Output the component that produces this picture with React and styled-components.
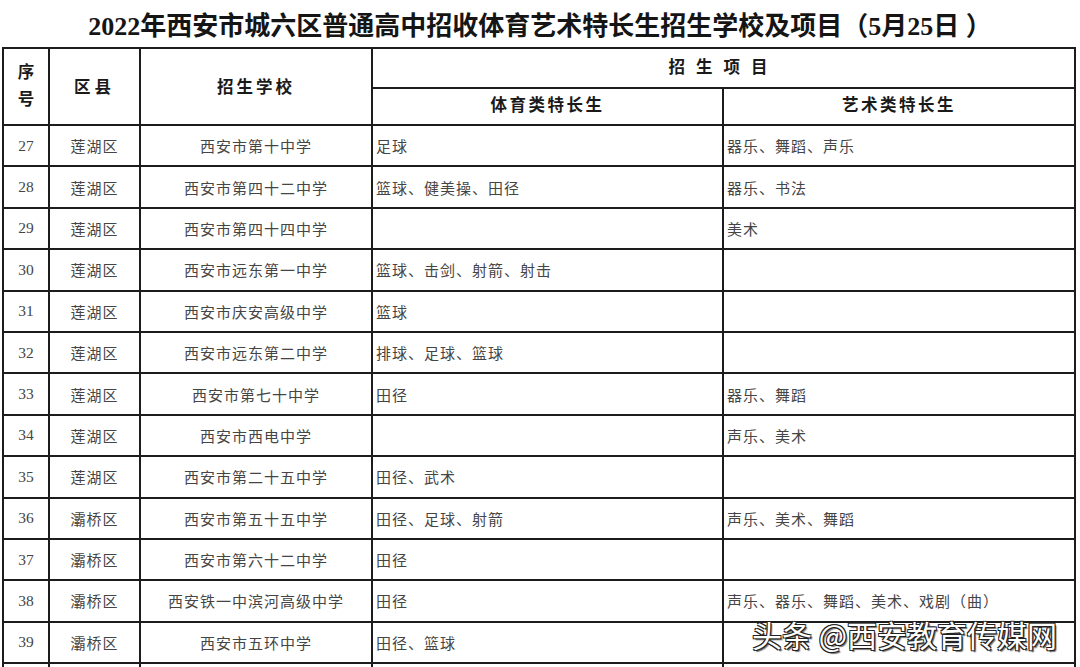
import React from "react";
import styled, { createGlobalStyle } from "styled-components";

const Global = createGlobalStyle`
  html, body { margin: 0; padding: 0; background: #fff; }
  body { width: 1080px; height: 667px; overflow: hidden; }
`;

const Page = styled.div`
  position: relative;
  width: 1080px;
  height: 667px;
  overflow: hidden;
  background: #fff;
  font-family: "Liberation Serif", "Noto Sans CJK SC", serif;
`;

const Title = styled.h1`
  margin: 0;
  height: 47px;
  display: flex;
  align-items: center;
  justify-content: center;
  padding-left: 0;
  font-size: 26px;
  font-weight: 700;
  color: #151515;
  letter-spacing: 0;
  white-space: pre;
`;

const Table = styled.table`
  margin-left: 2px;
  width: 1074px;
  border-collapse: collapse;
  table-layout: fixed;
`;

const Th = styled.th`
  border: 2px solid #1c1c1c;
  padding: ${(p) => (p.$pt ? p.$pt : "0")};
  font-size: 16.5px;
  font-weight: 700;
  color: #1a1a1a;
  letter-spacing: ${(p) => p.$spacing || "3px"};
  text-align: center;
  vertical-align: middle;
  line-height: 1.6;
`;

const Td = styled.td`
  border: 2px solid #1c1c1c;
  padding: 0;
  padding-left: ${(p) => (p.$left ? "3px" : "0")};
  font-size: ${(p) => (p.$num ? "15.5px" : "15px")};
  color: #454545;
  text-align: ${(p) => (p.$left ? "left" : "center")};
  letter-spacing: ${(p) => (p.$wide ? "1px" : "0")};
  vertical-align: middle;
  white-space: nowrap;
  height: 39.4px;
`;

const HeadRow = styled.tr`
  height: ${(p) => p.$h}px;
`;

const Watermark = styled.div`
  position: absolute;
  left: 752px;
  top: 612px;
  font-family: "Noto Sans CJK SC", "Noto Sans", sans-serif;
  font-size: 30px;
  color: #fff;
  white-space: nowrap;
  text-shadow: 1px 1px 0 #222, -1px -1px 0 #222, 1px -1px 0 #222, -1px 1px 0 #222,
    2px 2px 1px rgba(0, 0, 0, 0.55);
`;

const rows = [
  ["27", "莲湖区", "西安市第十中学", "足球", "器乐、舞蹈、声乐"],
  ["28", "莲湖区", "西安市第四十二中学", "篮球、健美操、田径", "器乐、书法"],
  ["29", "莲湖区", "西安市第四十四中学", "", "美术"],
  ["30", "莲湖区", "西安市远东第一中学", "篮球、击剑、射箭、射击", ""],
  ["31", "莲湖区", "西安市庆安高级中学", "篮球", ""],
  ["32", "莲湖区", "西安市远东第二中学", "排球、足球、篮球", ""],
  ["33", "莲湖区", "西安市第七十中学", "田径", "器乐、舞蹈"],
  ["34", "莲湖区", "西安市西电中学", "", "声乐、美术"],
  ["35", "莲湖区", "西安市第二十五中学", "田径、武术", ""],
  ["36", "灞桥区", "西安市第五十五中学", "田径、足球、射箭", "声乐、美术、舞蹈"],
  ["37", "灞桥区", "西安市第六十二中学", "田径", ""],
  ["38", "灞桥区", "西安铁一中滨河高级中学", "田径", "声乐、器乐、舞蹈、美术、戏剧（曲）"],
  ["39", "灞桥区", "西安市五环中学", "田径、篮球", ""],
  ["", "", "", "", ""],
];

export default function App() {
  return (
    <Page>
      <Global />
      <Title>2022年西安市城六区普通高中招收体育艺术特长生招生学校及项目（5月25日 ）</Title>
      <Table>
        <colgroup>
          <col style={{ width: 46 }} />
          <col style={{ width: 91 }} />
          <col style={{ width: 232 }} />
          <col style={{ width: 351 }} />
          <col style={{ width: 352 }} />
        </colgroup>
        <thead>
          <HeadRow $h={40}>
            <Th rowSpan={2} $spacing="0">序<br />号</Th>
            <Th rowSpan={2} $spacing="4px" $pt="4px 0 0">区县</Th>
            <Th rowSpan={2} $spacing="3px" $pt="4px 0 0">招生学校</Th>
            <Th colSpan={2} $spacing="11px">招生项目</Th>
          </HeadRow>
          <HeadRow $h={37}>
            <Th $spacing="2.5px">体育类特长生</Th>
            <Th $spacing="2.5px">艺术类特长生</Th>
          </HeadRow>
        </thead>
        <tbody>
          {rows.map((r, i) => (
            <tr key={i}>
              <Td $num>{r[0]}</Td>
              <Td $wide>{r[1]}</Td>
              <Td $wide>{r[2]}</Td>
              <Td $left $wide>{r[3]}</Td>
              <Td $left $wide>{r[4]}</Td>
            </tr>
          ))}
        </tbody>
      </Table>
      <Watermark>头条 @西安教育传媒网</Watermark>
    </Page>
  );
}
